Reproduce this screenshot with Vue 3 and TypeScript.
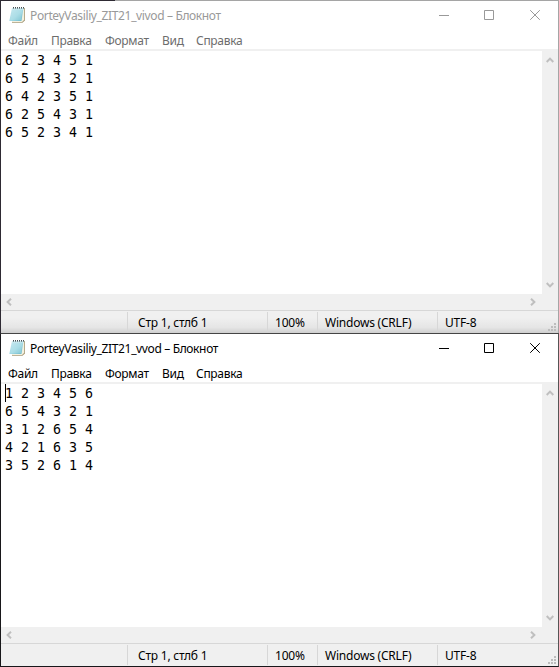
<script setup lang="ts">
interface NotepadWindow {
  id: string
  title: string
  active: boolean
  lines: string[]
}

const windows: NotepadWindow[] = [
  {
    id: 'vivod',
    title: 'PorteyVasiliy_ZIT21_vivod – Блокнот',
    active: false,
    lines: ['6 2 3 4 5 1', '6 5 4 3 2 1', '6 4 2 3 5 1', '6 2 5 4 3 1', '6 5 2 3 4 1'],
  },
  {
    id: 'vvod',
    title: 'PorteyVasiliy_ZIT21_vvod – Блокнот',
    active: true,
    lines: ['1 2 3 4 5 6', '6 5 4 3 2 1', '3 1 2 6 5 4', '4 2 1 6 3 5', '3 5 2 6 1 4'],
  },
]

const menu = [
  { key: 'file', label: 'Файл' },
  { key: 'edit', label: 'Правка' },
  { key: 'format', label: 'Формат' },
  { key: 'view', label: 'Вид' },
  { key: 'help', label: 'Справка' },
]
const spirals = [13, 15, 17, 19, 21, 23]
</script>

<template>
  <main class="desktop">
    <section v-for="w in windows" :key="w.id" class="window" :class="{ inactive: !w.active }">
      <header class="titlebar">
        <svg class="app-icon" width="16" height="17" viewBox="9 6 16 17">
          <defs>
            <linearGradient :id="'page-' + w.id" x1="0" y1="0" x2="1" y2="1">
              <stop offset="0" stop-color="#c9e9f1" />
              <stop offset=".55" stop-color="#a3d9e4" />
              <stop offset="1" stop-color="#66b6c8" />
            </linearGradient>
          </defs>
          <path d="M13 8H25V20.5L22.5 22.8H12V21H13Z" fill="#a79a78" />
          <path d="M13 8H24.2V19.8L22 22H12Z" fill="#f4f1df" />
          <path d="M12 8H23.5L21.5 21H9.3Z" :fill="`url(#page-${w.id})`" />
          <path d="M12 11H22M11.5 13H22M11.2 15H21.5M11 17H21.2M10.5 19H21" stroke="#c4e8ef" stroke-width=".5" />
          <path d="M12 9H24" stroke="#d8ecef" />
          <rect v-for="x in spirals" :key="x" :x="x" y="7" width="1" height="1.6" fill="#4a5357" />
        </svg>
        <h1 class="title">{{ w.title }}</h1>
        <div class="controls">
          <svg width="10" height="10" viewBox="0 0 10 10"><path d="M0 5.5H10" /></svg>
          <svg width="10" height="10" viewBox="0 0 10 10"><path d="M.5 .5H9.5V9.5H.5Z" /></svg>
          <svg width="10" height="10" viewBox="0 0 10 10"><path d="M.2 .2L9.8 9.8M9.8 .2L.2 9.8" /></svg>
        </div>
      </header>
      <nav class="menu">
        <span v-for="m in menu" :key="m.key" :class="m.key">{{ m.label }}</span>
      </nav>
      <div class="editor">
        <div class="text">
          <i v-if="w.active" class="caret"></i>
          <div v-for="(line, i) in w.lines" :key="i" class="line">{{ line }}</div>
        </div>
        <div class="vscroll">
          <svg width="8" height="6" viewBox="0 0 8 6"><path d="M.7 5L4 1.6L7.3 5" /></svg>
          <svg width="8" height="6" viewBox="0 0 8 6"><path d="M.7 1L4 4.4L7.3 1" /></svg>
        </div>
      </div>
      <div class="hscroll">
        <svg width="6" height="8" viewBox="0 0 6 8"><path d="M5 .7L1.6 4L5 7.3" /></svg>
        <svg width="6" height="8" viewBox="0 0 6 8"><path d="M1 .7L4.4 4L1 7.3" /></svg>
      </div>
      <footer class="status">
        <span class="blank"></span>
        <span class="position"><b>Стр 1, стлб 1</b></span>
        <span class="zoom"><b>100%</b></span>
        <span class="eol"><b>Windows (CRLF)</b></span>
        <span class="encoding"><b>UTF-8</b></span>
        <svg class="grip" width="8" height="8" viewBox="0 0 8 8">
          <path d="M6 0h2v2H6zM3 3h2v2H3zM6 3h2v2H6zM0 6h2v2H0zM3 6h2v2H3zM6 6h2v2H6z" />
        </svg>
      </footer>
    </section>
  </main>
</template>

<style>
body {
  margin: 0;
}
</style>

<style scoped>
.desktop {
  width: 559px;
  height: 667px;
  overflow: hidden;
  font-family: "Noto Sans", "Open Sans", sans-serif;
  font-size: 12px;
  color: #000;
}
.window {
  box-sizing: border-box;
  height: 334px;
  display: flex;
  flex-direction: column;
  border: 1px solid #18171a;
  border-top-color: #444;
  border-right-color: #555;
  background: #fff;
}
.window.inactive {
  height: 333px;
  border-bottom: 0;
  border-left-color: #2e2a33;
  border-right-color: #a5a5a5;
  border-top: 0;
}
.window.inactive::before {
  content: "";
  flex: none;
  height: 1px;
  margin-right: -1px;
  background: linear-gradient(90deg, #2e2a33 114px, #a5a5a5 114px);
}
.titlebar {
  height: 29px;
  flex: none;
  display: flex;
  align-items: flex-start;
}
.app-icon {
  margin: 5px 0 0 8px;
}
.title {
  flex: 1;
  margin: 6px 0 0 5px;
  font-size: 12px;
  font-weight: 400;
  line-height: 18px;
  white-space: nowrap;
  letter-spacing: -0.36px;
}
.controls {
  display: flex;
  gap: 35px;
  padding: 9px 18px 0 0;
}
.controls svg {
  display: block;
  fill: none;
  stroke: #000;
}
.controls svg:last-child {
  margin-left: 1px;
}
.inactive .title {
  color: #999;
}
.inactive .controls svg {
  stroke: #999;
}
.menu {
  height: 19px;
  flex: none;
  display: flex;
  line-height: 22px;
  padding-left: 7px;
  white-space: nowrap;
  letter-spacing: -0.3px;
}
.menu .file { width: 43px; }
.menu .edit { width: 54px; }
.menu .format { width: 57px; }
.menu .view { width: 34px; }
.inactive .menu {
  color: #6d6d6d;
}
.editor {
  height: 245px;
  box-sizing: border-box;
  flex: none;
  display: flex;
  border-top: 2px solid #f0f0f0;
}
.text {
  position: relative;
  flex: 1;
  padding: 1px 0 0 4px;
  font-family: "DejaVu Sans Mono", monospace;
  font-size: 13.3px;
  line-height: 18px;
  white-space: pre;
}
.line {
  height: 18px;
}
.caret {
  position: absolute;
  left: 4px;
  top: 0;
  width: 1px;
  height: 18px;
  background: #000;
}
.vscroll {
  width: 16px;
  box-sizing: border-box;
  padding: 6px 0 6px 4px;
  display: flex;
  flex-direction: column;
  justify-content: space-between;
  background: #f0f0f0;
}
.vscroll svg,
.hscroll svg {
  display: block;
  fill: none;
  stroke: #bfbfbf;
  stroke-width: 2;
}
.hscroll {
  height: 16px;
  box-sizing: border-box;
  flex: none;
  padding: 0 22px 0 5px;
  display: flex;
  align-items: center;
  justify-content: space-between;
  background: #f0f0f0;
}
.status {
  height: 23px;
  box-sizing: border-box;
  flex: none;
  display: flex;
  border-top: 1px solid #d7d7d7;
  padding-top: 1px;
  background: #f0f0f0;
  line-height: 22px;
  white-space: nowrap;
}
.inactive .status {
  background: linear-gradient(#f0f0f0 30%, #e5e5e5 75%, #cfcfcf);
}
.status span {
  box-sizing: border-box;
  height: 20px;
  border-right: 1px solid #d7d7d7;
  padding-left: 7px;
}
.status b {
  font-weight: 400;
  letter-spacing: -0.22px;
}
.status .blank { width: 127px; }
.status .position { width: 140px; padding-left: 10px; }
.status .zoom { width: 50px; }
.status .eol { width: 120px; }
.status .encoding { flex: 1; border-right: 0; }
.grip {
  align-self: flex-end;
  margin: 0 2px 2px 0;
  fill: #bdbdbd;
}
</style>
